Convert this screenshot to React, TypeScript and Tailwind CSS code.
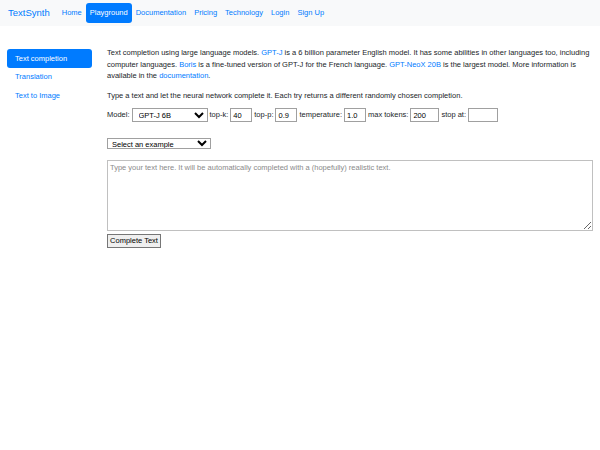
import React from "react";

export default function App() {
  const link = "text-[#007bff]";
  const inputCls =
    "h-[14px] border border-[#a0a0a0] bg-white px-[2px] text-[7.5px] leading-none text-black outline-none";
  return (
    <div
      className="min-h-[450px] bg-white text-[7.5px] leading-[11.5px] text-[#212529]"
      style={{ fontFamily: '"Liberation Sans", Arial, sans-serif' }}
    >
      <nav className="flex h-[26px] items-center bg-[#f8f9fa] pl-[8px]">
        <span className={`mr-[8px] text-[9.5px] ${link}`}>TextSynth</span>
        <div className="flex items-center text-[7.5px]">
          <span className={`px-[4px] py-[4px] ${link}`}>Home</span>
          <span className="rounded-[3px] bg-[#007bff] px-[4px] py-[4px] text-white">Playground</span>
          <span className={`px-[4px] py-[4px] ${link}`}>Documentation</span>
          <span className={`px-[4px] py-[4px] ${link}`}>Pricing</span>
          <span className={`px-[4px] py-[4px] ${link}`}>Technology</span>
          <span className={`px-[4px] py-[4px] ${link}`}>Login</span>
          <span className={`px-[4px] py-[4px] ${link}`}>Sign Up</span>
        </div>
      </nav>
      <div className="flex pl-[7px] pr-[7px] pt-[21px]">
        <div className="mt-[2px] flex w-[85px] shrink-0 flex-col">
          <span className="rounded-[3px] bg-[#007bff] px-[8px] py-[3.5px] leading-[11.5px] text-white">Text completion</span>
          <span className={`px-[8px] py-[3.5px] ${link}`}>Translation</span>
          <span className={`px-[8px] py-[3.5px] ${link}`}>Text to Image</span>
        </div>
        <div className="ml-[15px] flex-1">
          <p className="mb-[8px]">
            Text completion using large language models. <span className={link}>GPT-J</span> is a 6 billion parameter
            English model. It has some abilities in other languages too, including computer languages.{" "}
            <span className={link}>Boris</span> is a fine-tuned version of GPT-J for the French language.{" "}
            <span className={link}>GPT-NeoX 20B</span> is the largest model. More information is available in the{" "}
            <span className={link}>documentation</span>.
          </p>
          <p className="mb-[7px]">
            Type a text and let the neural network complete it. Each try returns a different randomly chosen completion.
          </p>
          <div className="flex h-[14px] items-center gap-[2px]">
            <span>Model:</span>
            <select className={`${inputCls} w-[76px] px-0`} defaultValue="a">
              <option value="a">GPT-J 6B</option>
            </select>
            <span>top-k:</span>
            <input className={`${inputCls} w-[22px]`} defaultValue="40" />
            <span>top-p:</span>
            <input className={`${inputCls} w-[22px]`} defaultValue="0.9" />
            <span>temperature:</span>
            <input className={`${inputCls} w-[22px]`} defaultValue="1.0" />
            <span>max tokens:</span>
            <input className={`${inputCls} w-[29px]`} defaultValue="200" />
            <span>stop at:</span>
            <input className={`${inputCls} w-[30px]`} defaultValue="" />
          </div>
          <div className="mt-[16px]">
            <select className="h-[11px] w-[104px] border border-[#a0a0a0] bg-white text-[7.5px] leading-none text-black outline-none" defaultValue="a">
              <option value="a">Select an example</option>
            </select>
          </div>
          <textarea
            className="mt-[9px] block h-[71px] w-full border border-[#c0c0c0] px-[2px] py-[1px] text-[7.5px] leading-[11px] placeholder:text-[#8a8a8a] outline-none"
            placeholder="Type your text here. It will be automatically completed with a (hopefully) realistic text."
          />
          <button className="mt-[3px] block h-[14px] w-[54px] border border-[#767676] bg-[#efefef] text-[7.5px] leading-none text-black">
            Complete Text
          </button>
        </div>
      </div>
    </div>
  );
}
